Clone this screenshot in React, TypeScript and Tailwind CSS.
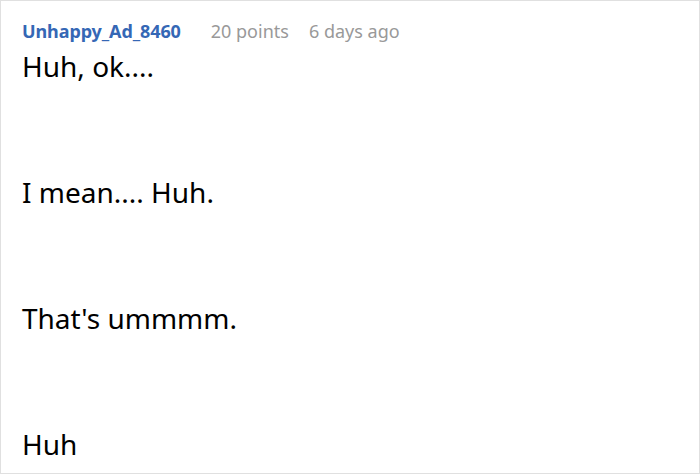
export default function App() {
  const body = "Huh, ok....\n\n\n\nI mean.... Huh.\n\n\n\nThat's ummmm.\n\n\n\nHuh";
  return (
    <div className="w-[700px] h-[474px] bg-white border border-[#e0e0e0] pl-[21px] pt-[19px] overflow-hidden" style={{ fontFamily: '"Noto Sans", sans-serif' }}>
      <div className="flex items-baseline text-[18px] leading-[22px]">
        <span className="font-bold text-[#3567b5] tracking-[-0.1px]">Unhappy_Ad_8460</span>
        <span className="ml-[30px] text-[#999999]">20 points</span>
        <span className="ml-[20px] text-[#999999]">6 days ago</span>
      </div>
      <div className="mt-[9px] text-[28px] leading-[31.5px] text-black whitespace-pre-line">{body}</div>
    </div>
  );
}
